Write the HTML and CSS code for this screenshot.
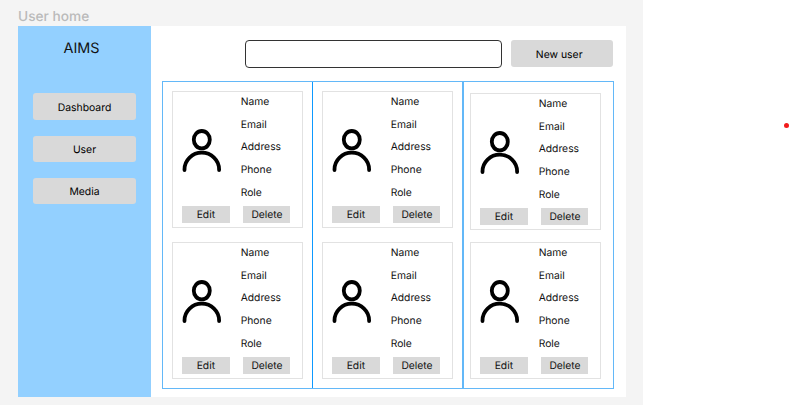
FILE: index.html
```html
<!DOCTYPE html>
<html lang="en">
<head>
<meta charset="utf-8">
<title>User home</title>
<link rel="stylesheet" href="styles.css">
</head>
<body>
<svg class="symbols" aria-hidden="true">
  <symbol id="person" viewBox="0 0 40 44">
    <ellipse cx="19.8" cy="10.7" rx="8" ry="8.7"/>
    <path d="M2.5 41V40.5C2.5 31 10.3 23.7 19.8 23.7S37.1 31 37.1 40.5V41"/>
  </symbol>
</svg>
<div class="workspace">
  <div class="canvas">
    <div class="frame-title">User home</div>
    <div class="frame">
      <nav class="sidebar">
        <div class="brand">AIMS</div>
        <button class="btn">Dashboard</button>
        <button class="btn">User</button>
        <button class="btn">Media</button>
      </nav>
      <main class="main">
        <div class="toolbar">
          <input class="search" type="text" aria-label="Search">
          <button class="btn new-user">New user</button>
        </div>
        <div class="columns" id="columns"></div>
      </main>
    </div>
  </div>
  <div class="margin"><span class="dot"></span></div>
</div>
<script src="cards.js"></script>
</body>
</html>
```
FILE: cards.js
```js
const fields = ['Name', 'Email', 'Address', 'Phone', 'Role'];
const card = `
  <article class="card">
    <div class="details">
      <svg class="avatar"><use href="#person"/></svg>
      <ul class="fields">${fields.map(f => `<li>${f}</li>`).join('')}</ul>
    </div>
    <div class="actions"><button class="action">Edit</button><button class="action">Delete</button></div>
  </article>`;
document.getElementById('columns').innerHTML =
  `<section class="column">${card}${card}</section>`.repeat(3);
```
FILE: styles.css
```css
* { box-sizing: border-box; }
body {
  margin: 0;
  background: #fff;
  color: #111;
  font-family: Inter, "Liberation Sans", sans-serif;
  font-size: 10.3px;
  text-rendering: geometricPrecision;
  overflow: hidden;
}
button, input { font: inherit; color: inherit; border: 0; padding: 0; margin: 0; text-rendering: inherit; }
.symbols { display: none; }
.workspace { display: flex; height: 405px; }
.canvas { width: 642.6px; padding: 8px 0 0 18px; background: #f4f4f4; }
.frame-title { height: 17.7px; line-height: 18px; font-size: 13.7px; font-weight: 500; color: #bababa; }
.frame { display: flex; width: 608px; height: 371.2px; background: #fff; }
.sidebar {
  width: 133px;
  padding: 13.8px 15.3px 0;
  background: #93d0ff;
  display: flex;
  flex-direction: column;
  gap: 15.8px;
}
.brand { height: 38.2px; line-height: 20px; padding-right: 6px; text-align: center; font-size: 14.4px; }
.btn { flex: none; width: 102.4px; height: 26.4px; border-radius: 3px; background: #d9d9d9; text-align: center; color: #000; font-size: 10.4px; padding-top: 1px; }
.main { padding: 14.6px 0 0 11px; }
.toolbar { display: flex; gap: 9px; padding-left: 83px; height: 41px; }
.search { width: 257px; height: 27.5px; border: 1px solid #333; border-radius: 4px; background: #fff; }
.new-user { padding: 2px 6px 0 0; }
.columns { display: flex; width: 452px; height: 308px; border: 1px solid #63b8f8; }
.column {
  flex: none;
  width: 149px;
  padding: 9px 0 0 9px;
  display: flex;
  flex-direction: column;
  gap: 14px;
}
.column:nth-child(2) { width: 150px; border-left: 1px solid #0d99ff; }
.column:nth-child(3) { width: 151px; padding: 11px 0 0 6px; gap: 12px; border-left: 2px solid #63b8f8; }
.card { width: 131px; height: 137px; border: 1px solid #e2e2e2; padding: 0 0 0 9px; }
.details { display: flex; height: 114px; }
.avatar { width: 40px; height: 44px; margin: 36.3px 19px 0 -0.3px; fill: none; stroke: #000; stroke-width: 3.8; stroke-linecap: round; }
.fields { list-style: none; margin: 0; padding: 0; line-height: 22.65px; margin-top: -1.4px; }
.actions { display: flex; gap: 13px; }
.action { width: 47.7px; height: 16.3px; padding-top: 1.2px; background: #d9d9d9; color: #111; }
.action:last-child { padding-left: 1px; }
.margin { flex: 1; padding: 123px 0 0 141px; }
.dot { display: block; width: 5px; height: 5px; border-radius: 50%; background: #f21b1b; }
```
